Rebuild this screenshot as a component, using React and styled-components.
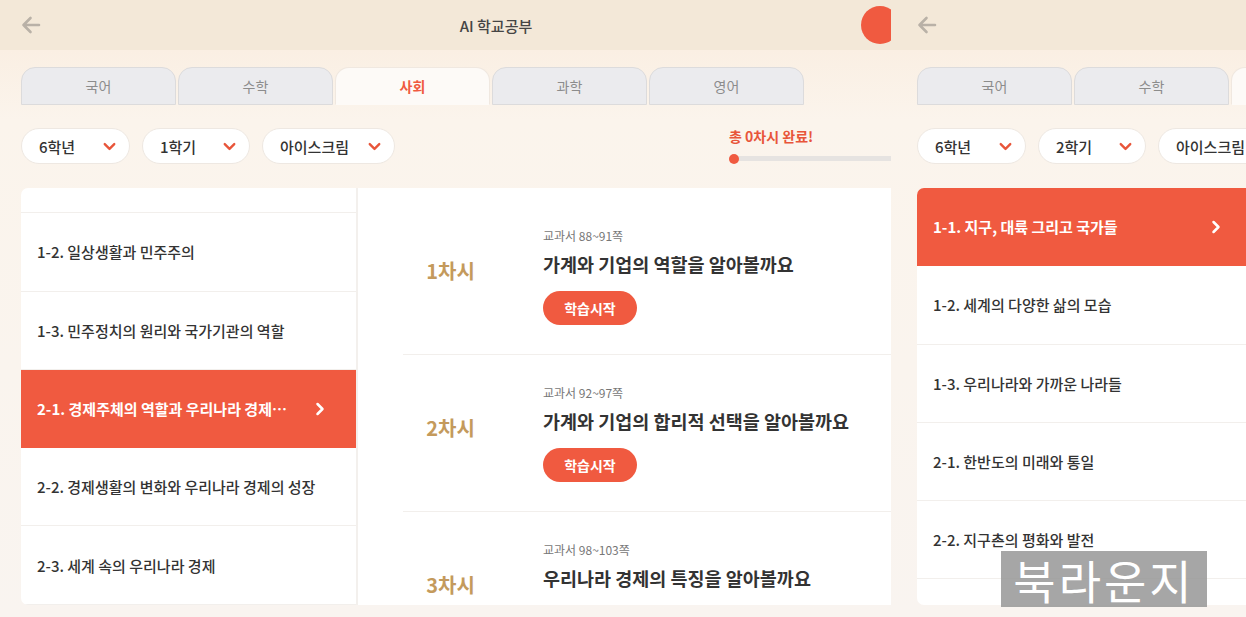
import React, { useLayoutEffect, useRef } from "react"
import styled, { createGlobalStyle, css } from "styled-components"
import { ChevronDown, ChevronRight } from "lucide-react"

const accent = "#F05A40"
const font = `"Noto Sans CJK KR", "Noto Sans", sans-serif`

const GlobalStyle = createGlobalStyle`
  html, body {
    margin: 0;
    padding: 0;
    overflow: hidden;
    background: #FAF5F0;
  }
  body {
    font-family: ${font};
    -webkit-font-smoothing: antialiased;
  }
  * { box-sizing: border-box; }
`

const Stage = styled.div`
  position: relative;
  display: flex;
  width: 1246px;
  height: 617px;
  overflow: hidden;
`

const Frame = styled.div`
  flex: ${p => (p.$width ? `0 0 ${p.$width}px` : "1 1 auto")};
  height: 100%;
  overflow: hidden;
`

const Screen = styled.div`
  --inset: ${p => p.$inset}px;
  width: 992px;
  height: 100%;
  display: flex;
  flex-direction: column;
  background: linear-gradient(180deg, #FAEFE3 50px, #FBF4EC 120px, #F9F4F0 100%);
`

const Header = styled.header`
  height: 50px;
  flex-shrink: 0;
  display: grid;
  grid-template-columns: 1fr auto 1fr;
  align-items: center;
  padding: 0 var(--inset);
  background: #F3E8D8;
`

const BackButton = styled.span`
  display: flex;
  color: #B9B1A7;
`

const Title = styled.h1`
  margin: 0;
  font-size: 15px;
  font-weight: 500;
  color: #454545;
`

const ProfileDot = styled.span`
  justify-self: end;
  width: 38px;
  height: 38px;
  margin-right: 72px;
  border-radius: 50%;
  background: ${accent};
`

const Tabs = styled.nav`
  display: flex;
  gap: 2px;
  padding: 17px 0 0 var(--inset);
`

const Tab = styled.div`
  width: 155px;
  height: 38px;
  display: flex;
  align-items: center;
  justify-content: center;
  border: 1px solid #DCDBDC;
  border-radius: 14px 14px 0 0;
  background: #EBEBEE;
  color: #8C8C8C;
  font-size: 14px;

  ${p => p.$active && css`
    background: #FDFAF7;
    border-color: #F0E8E0;
    border-bottom-color: transparent;
    color: ${accent};
    font-weight: 700;
  `}
`

const Filters = styled.div`
  display: flex;
  align-items: center;
  gap: 12px;
  padding: 23px 21px 0 var(--inset);
`

const Select = styled.div`
  width: ${p => p.$w}px;
  height: 36px;
  display: flex;
  align-items: center;
  justify-content: space-between;
  padding: 0 10px 0 17px;
  border: 1px solid #EEE8E2;
  border-radius: 18px;
  background: #fff;
  color: #333;
  font-size: 15px;
  font-weight: 500;

  svg { color: #E8553A; }
`

const Progress = styled.div`
  margin-left: auto;
  width: 242px;
  display: flex;
  flex-direction: column;
  gap: 10px;
  margin-top: -4px;
`

const ProgressLabel = styled.span`
  font-size: 14px;
  line-height: 19px;
  font-weight: 700;
  color: #E8553A;
`

const Track = styled.div`
  position: relative;
  height: 5px;
  border-radius: 3px;
  background: #E6E3E1;
`

const Knob = styled.span`
  position: absolute;
  left: 0;
  top: 50%;
  width: 10px;
  height: 10px;
  border-radius: 50%;
  background: ${accent};
  transform: translateY(-50%);
`

const Card = styled.section`
  flex: 1;
  min-height: 0;
  margin: 24px 21px 12px var(--inset);
  display: grid;
  grid-template-columns: 337px 1fr;
  grid-template-rows: minmax(0, 1fr);
  border-radius: 7px;
  background: #fff;
  overflow: hidden;
`

const List = styled.ul`
  margin: 0;
  padding: 0;
  list-style: none;
  overflow: hidden;
  border-right: 2px solid #F3F0ED;
`

const Row = styled.li`
  height: 78.3px;
  display: flex;
  align-items: center;
  padding: 0 16px;
  border-bottom: 1px solid #F2EFEC;
  color: #333;
  font-size: 15px;
  font-weight: 500;

  ${p => p.$active && css`
    background: ${accent};
    border-bottom-color: ${accent};
    color: #fff;
    font-weight: 700;
  `}
`

const RowText = styled.span`
  flex: 1;
  min-width: 0;
  white-space: nowrap;
  overflow: hidden;
  text-overflow: ellipsis;
`

const RowArrow = styled.span`
  display: flex;
  margin: 0 10px 0 16px;
`

const Lessons = styled.div`
  padding: 10px 0 0 45px;
  overflow: hidden;
`

const Lesson = styled.article`
  height: 157px;
  display: flex;
  align-items: center;
  border-bottom: 1px solid #F2EFEC;
`

const LessonNo = styled.div`
  flex: 0 0 95px;
  margin-bottom: 12px;
  text-align: center;
  font-size: 20px;
  font-weight: 700;
  color: #C49A5C;
`

const LessonBody = styled.div`
  margin-left: 45px;
  display: flex;
  flex-direction: column;
  align-items: flex-start;
`

const Pages = styled.span`
  font-size: 12px;
  line-height: 16px;
  color: #777;
`

const LessonTitle = styled.h3`
  margin: 7px 0 0;
  font-size: 18.5px;
  line-height: 26px;
  font-weight: 700;
  color: #333;
`

const StartButton = styled.button`
  margin-top: 14px;
  width: 94px;
  height: 34px;
  border: 0;
  border-radius: 17px;
  background: ${accent};
  color: #fff;
  font: 700 14px ${font};
`

const Watermark = styled.div`
  position: absolute;
  left: 1001px;
  top: 551px;
  width: 206px;
  height: 56px;
  background: rgba(150, 150, 150, 0.85);
  color: #fff;
  font-size: 46px;
  line-height: 56px;
  letter-spacing: 3px;
  text-align: center;
`

const subjects = ["국어", "수학", "사회", "과학", "영어"]

const screens = [
  {
    width: 891,
    inset: 21,
    semester: "1학기",
    scroll: 53,
    active: 3,
    units: [
      "1-1. 우리나라의 민주주의 발전과 시민 참여",
      "1-2. 일상생활과 민주주의",
      "1-3. 민주정치의 원리와 국가기관의 역할",
      "2-1. 경제주체의 역할과 우리나라 경제체제",
      "2-2. 경제생활의 변화와 우리나라 경제의 성장",
      "2-3. 세계 속의 우리나라 경제",
    ],
    lessons: [
      { pages: "교과서 88~91쪽", title: "가계와 기업의 역할을 알아볼까요" },
      { pages: "교과서 92~97쪽", title: "가계와 기업의 합리적 선택을 알아볼까요" },
      { pages: "교과서 98~103쪽", title: "우리나라 경제의 특징을 알아볼까요" },
    ],
  },
  {
    inset: 26,
    semester: "2학기",
    scroll: 0,
    active: 0,
    units: [
      "1-1. 지구, 대륙 그리고 국가들",
      "1-2. 세계의 다양한 삶의 모습",
      "1-3. 우리나라와 가까운 나라들",
      "2-1. 한반도의 미래와 통일",
      "2-2. 지구촌의 평화와 발전",
      "2-3. 지속 가능한 지구촌",
    ],
    lessons: [
      { pages: "교과서 8~11쪽", title: "세계의 모습을 알아볼까요" },
      { pages: "교과서 12~15쪽", title: "대륙과 대양을 알아볼까요" },
      { pages: "교과서 16~19쪽", title: "여러 나라의 위치를 알아볼까요" },
    ],
  },
]

const BackArrow = () => (
  <svg width="20" height="20" viewBox="0 0 20 20" fill="none" stroke="currentColor"
    strokeWidth="2.6" strokeLinecap="round" strokeLinejoin="round">
    <path d="M9.5 3 L2.5 10 L9.5 17 M2.5 10 H18" />
  </svg>
)

const UnitList = ({ units, active, scroll }) => {
  const ref = useRef(null)

  useLayoutEffect(() => {
    if (ref.current) ref.current.scrollTop = scroll
  }, [scroll])

  return (
    <List ref={ref}>
      {units.map((u, i) => (
        <Row key={u} $active={i === active}>
          <RowText>{u}</RowText>
          {i === active && (
            <RowArrow><ChevronRight size={20} strokeWidth={3} /></RowArrow>
          )}
        </Row>
      ))}
    </List>
  )
}

const AppScreen = ({ data }) => (
  <Screen $inset={data.inset}>
    <Header>
      <BackButton><BackArrow /></BackButton>
      <Title>AI 학교공부</Title>
      <ProfileDot />
    </Header>

    <Tabs>
      {subjects.map(s => (
        <Tab key={s} $active={s === "사회"}>{s}</Tab>
      ))}
    </Tabs>

    <Filters>
      <Select $w={109}>6학년<ChevronDown size={19} strokeWidth={3} /></Select>
      <Select $w={108}>{data.semester}<ChevronDown size={19} strokeWidth={3} /></Select>
      <Select $w={133}>아이스크림<ChevronDown size={19} strokeWidth={3} /></Select>
      <Progress>
        <ProgressLabel>총 0차시 완료!</ProgressLabel>
        <Track><Knob /></Track>
      </Progress>
    </Filters>

    <Card>
      <UnitList units={data.units} active={data.active} scroll={data.scroll} />
      <Lessons>
        {data.lessons.map((l, i) => (
          <Lesson key={l.title}>
            <LessonNo>{i + 1}차시</LessonNo>
            <LessonBody>
              <Pages>{l.pages}</Pages>
              <LessonTitle>{l.title}</LessonTitle>
              <StartButton>학습시작</StartButton>
            </LessonBody>
          </Lesson>
        ))}
      </Lessons>
    </Card>
  </Screen>
)

export default function App() {
  return (
    <>
      <GlobalStyle />
      <Stage>
        {screens.map((s, i) => (
          <Frame key={i} $width={s.width}>
            <AppScreen data={s} />
          </Frame>
        ))}
        <Watermark>북라운지</Watermark>
      </Stage>
    </>
  )
}
